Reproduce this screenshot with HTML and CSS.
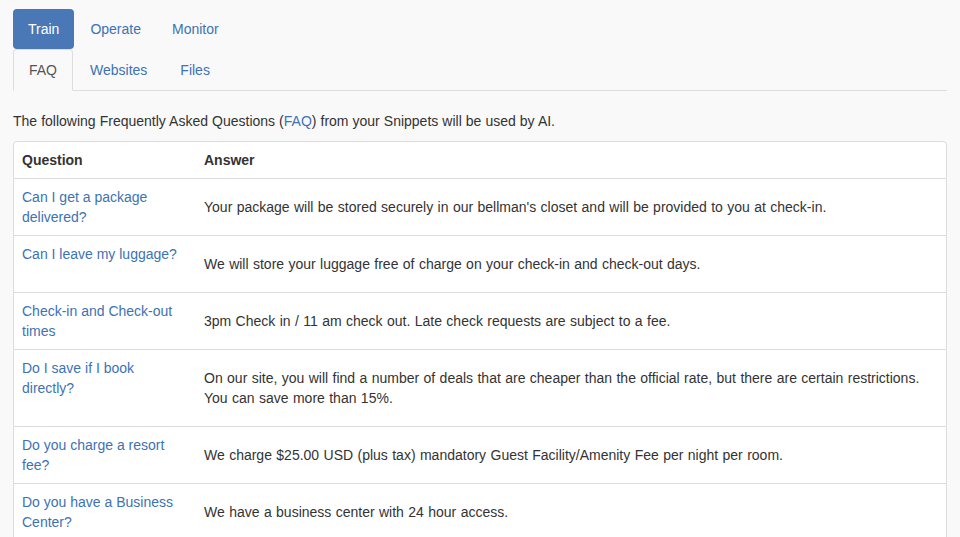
FILE: index.html
```html
<!DOCTYPE html>
<html>
<head>
<meta charset="utf-8">
<link rel="stylesheet" href="styles.css">
</head>
<body>
<div class="page">
  <ul class="pills">
    <li class="active"><a href="#">Train</a></li>
    <li><a href="#">Operate</a></li>
    <li><a href="#">Monitor</a></li>
  </ul>
  <ul class="tabs">
    <li class="active"><a href="#">FAQ</a></li>
    <li><a href="#">Websites</a></li>
    <li><a href="#">Files</a></li>
  </ul>
  <p class="intro">The following Frequently Asked Questions (<a href="#">FAQ</a>) from your Snippets will be used by AI.</p>
  <div class="panel">
    <table class="faq">
      <colgroup><col class="qcol"><col></colgroup>
      <thead>
        <tr><th>Question</th><th>Answer</th></tr>
      </thead>
      <tbody>
        <tr><td class="q"><a href="#">Can I get a package delivered?</a></td><td class="a">Your package will be stored securely in our bellman's closet and will be provided to you at check-in.</td></tr>
        <tr><td class="q"><a href="#">Can I leave my luggage?</a></td><td class="a">We will store your luggage free of charge on your check-in and check-out days.</td></tr>
        <tr><td class="q"><a href="#">Check-in and Check-out times</a></td><td class="a">3pm Check in / 11 am check out. Late check requests are subject to a fee.</td></tr>
        <tr><td class="q"><a href="#">Do I save if I book directly?</a></td><td class="a">On our site, you will find a number of deals that are cheaper than the official rate, but there are certain restrictions. You can save more than 15%.</td></tr>
        <tr><td class="q"><a href="#">Do you charge a resort fee?</a></td><td class="a">We charge $25.00 USD (plus tax) mandatory Guest Facility/Amenity Fee per night per room.</td></tr>
        <tr><td class="q"><a href="#">Do you have a Business Center?</a></td><td class="a">We have a business center with 24 hour access.</td></tr>
      </tbody>
    </table>
  </div>
</div>
</body>
</html>
```

FILE: styles.css
```css
html, body {
  margin: 0;
  padding: 0;
  background: #f9f9f9;
}
body {
  font-family: "Liberation Sans", Arial, Helvetica, sans-serif;
  font-size: 14px;
  line-height: 20px;
  color: #333;
}
a {
  color: #3d72b4;
  text-decoration: none;
}
.page {
  padding: 9px 13px 0 13px;
}
.pills, .tabs {
  list-style: none;
  margin: 0;
  padding: 0;
  display: flex;
}
.pills li {
  margin-right: 1px;
}
.pills li a {
  display: block;
  padding: 10px 15px;
  border-radius: 4px;
}
.pills li.active a {
  background: #4a77b5;
  color: #fff;
}
.tabs {
  border-bottom: 1px solid #ddd;
}
.tabs li {
  margin-bottom: -1px;
  margin-right: 1px;
}
.tabs li a {
  display: block;
  padding: 10px 15px;
  border: 1px solid transparent;
  border-radius: 4px 4px 0 0;
}
.tabs li.active a {
  color: #555;
  background: #f9f9f9;
  border-color: #ddd #ddd transparent #ddd;
}
.intro {
  margin: 20px 0 10px 0;
  word-spacing: 0.15px;
}
.panel {
  background: #fff;
  border: 1px solid #ddd;
  border-radius: 4px;
  overflow: hidden;
}
.faq {
  width: 100%;
  border-collapse: collapse;
  table-layout: fixed;
}
.qcol {
  width: 182px;
}
.faq th {
  text-align: left;
  font-weight: bold;
  padding: 8px;
  color: #333;
}
.faq td {
  border-top: 1px solid #ddd;
  padding: 8px;
}
.faq td.q {
  vertical-align: top;
}
.faq td.a {
  vertical-align: top;
  padding-top: 18px;
  padding-bottom: 18px;
  word-spacing: 0.5px;
}
```
